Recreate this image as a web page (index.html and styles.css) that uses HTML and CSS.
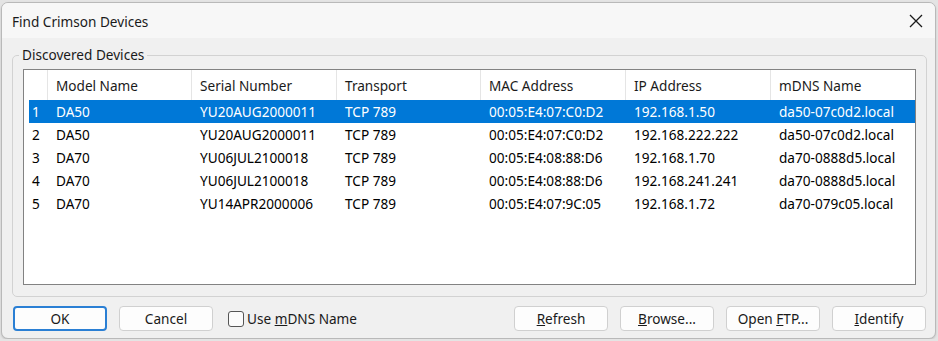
FILE: index.html
```html
<!DOCTYPE html>
<html lang="en">
<head>
  <meta charset="UTF-8">
  <title>Find Crimson Devices</title>
  <link rel="stylesheet" href="styles.css">
</head>
<body>
  <div class="window">
    <div class="titlebar">
      <span class="title">Find Crimson Devices</span>
      <span class="close">
        <svg width="14" height="14" viewBox="0 0 14 14"><path d="M1 1 L13 13 M13 1 L1 13" stroke="#1a1a1a" stroke-width="1.3" fill="none"/></svg>
      </span>
    </div>

    <div class="content">
      <fieldset class="group">
        <legend>Discovered Devices</legend>
        <div class="listview">
          <div class="lv-header">
            <div class="col num"></div>
            <div class="col">Model Name</div>
            <div class="col">Serial Number</div>
            <div class="col">Transport</div>
            <div class="col">MAC Address</div>
            <div class="col">IP Address</div>
            <div class="col last">mDNS Name</div>
          </div>
          <div class="lv-row selected">
            <div class="cell num">1</div><div class="cell">DA50</div><div class="cell">YU20AUG2000011</div><div class="cell">TCP 789</div><div class="cell">00:05:E4:07:C0:D2</div><div class="cell">192.168.1.50</div><div class="cell">da50-07c0d2.local</div>
          </div>
          <div class="lv-row">
            <div class="cell num">2</div><div class="cell">DA50</div><div class="cell">YU20AUG2000011</div><div class="cell">TCP 789</div><div class="cell">00:05:E4:07:C0:D2</div><div class="cell">192.168.222.222</div><div class="cell">da50-07c0d2.local</div>
          </div>
          <div class="lv-row">
            <div class="cell num">3</div><div class="cell">DA70</div><div class="cell">YU06JUL2100018</div><div class="cell">TCP 789</div><div class="cell">00:05:E4:08:88:D6</div><div class="cell">192.168.1.70</div><div class="cell">da70-0888d5.local</div>
          </div>
          <div class="lv-row">
            <div class="cell num">4</div><div class="cell">DA70</div><div class="cell">YU06JUL2100018</div><div class="cell">TCP 789</div><div class="cell">00:05:E4:08:88:D6</div><div class="cell">192.168.241.241</div><div class="cell">da70-0888d5.local</div>
          </div>
          <div class="lv-row">
            <div class="cell num">5</div><div class="cell">DA70</div><div class="cell">YU14APR2000006</div><div class="cell">TCP 789</div><div class="cell">00:05:E4:07:9C:05</div><div class="cell">192.168.1.72</div><div class="cell">da70-079c05.local</div>
          </div>
        </div>
      </fieldset>

      <div class="buttons">
        <button class="btn default">OK</button>
        <button class="btn">Cancel</button>
        <label class="check"><span class="box"></span><span>Use <u>m</u>DNS Name</span></label>
        <div class="spacer"></div>
        <button class="btn"><u>R</u>efresh</button>
        <button class="btn"><u>B</u>rowse...</button>
        <button class="btn">Open <u>F</u>TP...</button>
        <button class="btn"><u>I</u>dentify</button>
      </div>
    </div>
  </div>
</body>
</html>
```

FILE: styles.css
```css
body {
  margin: 0;
  background: #e4e4e4;
  font-family: "Noto Sans", "Open Sans", sans-serif;
  font-size: 13.6px;
  color: #000;
}
.window {
  margin: 2px 0 0 1px;
  width: 933px;
  height: 335px;
  border: 1px solid #b9b9b9;
  border-radius: 7px;
  background: #f0f0f0;
  overflow: hidden;
  box-shadow: 0 1px 2px rgba(0, 0, 0, 0.15);
}
.titlebar {
  height: 35px;
  display: flex;
  align-items: center;
  justify-content: space-between;
  padding: 0 10px 0 10px;
  background: #f7f7f7;
}
.title {
  color: #1a1a1a;
  padding-top: 1px;
}
.close {
  display: flex;
  padding-right: 2px;
}
.content {
  padding: 8px 8px 0 10px;
}
.group {
  margin: 0;
  padding: 5px 10px 11px 10px;
  border: 1px solid #d2d2d2;
  border-radius: 5px;
}
.group legend {
  margin-left: -4px;
  padding: 0 3px;
  line-height: 18px;
  color: #1a1a1a;
}
.listview {
  height: 214px;
  border: 1px solid #828282;
  background: #fff;
}
.lv-header {
  display: grid;
  grid-template-columns: 24px 144px 145px 144px 145px 145px 1fr;
  height: 30px;
}
.lv-header .col {
  display: flex;
  align-items: center;
  padding-left: 8px;
  border-right: 1px solid #e5e5e5;
  color: #1a1a1a;
}
.lv-header .col.last {
  border-right: none;
}
.lv-row {
  display: grid;
  grid-template-columns: 19px 144px 145px 144px 145px 145px 1fr;
  height: 23px;
  margin-left: 5px;
  align-items: center;
}
.lv-row .cell {
  padding-left: 8px;
  white-space: nowrap;
}
.lv-row .cell.num {
  padding-left: 3px;
}
.lv-row.selected {
  background: #0078d7;
  color: #fff;
}
.buttons {
  display: flex;
  align-items: center;
  gap: 12px;
  margin-top: 9px;
  padding-left: 1px;
  padding-right: 1px;
}
.spacer {
  flex: 1;
}
.btn {
  width: 94px;
  height: 25px;
  background: #fdfdfd;
  border: 1px solid #d0d0d0;
  border-radius: 4px;
  font-family: inherit;
  font-size: 13.6px;
  color: #1a1a1a;
  padding: 0;
}
.btn.default {
  border: 2px solid #2a7fd4;
}
.check {
  display: flex;
  align-items: center;
  margin-left: 3px;
  color: #1a1a1a;
}
.check .box {
  width: 14px;
  height: 14px;
  border: 1px solid #555;
  border-radius: 3px;
  background: #fbfbfb;
  margin-right: 3px;
}
```
